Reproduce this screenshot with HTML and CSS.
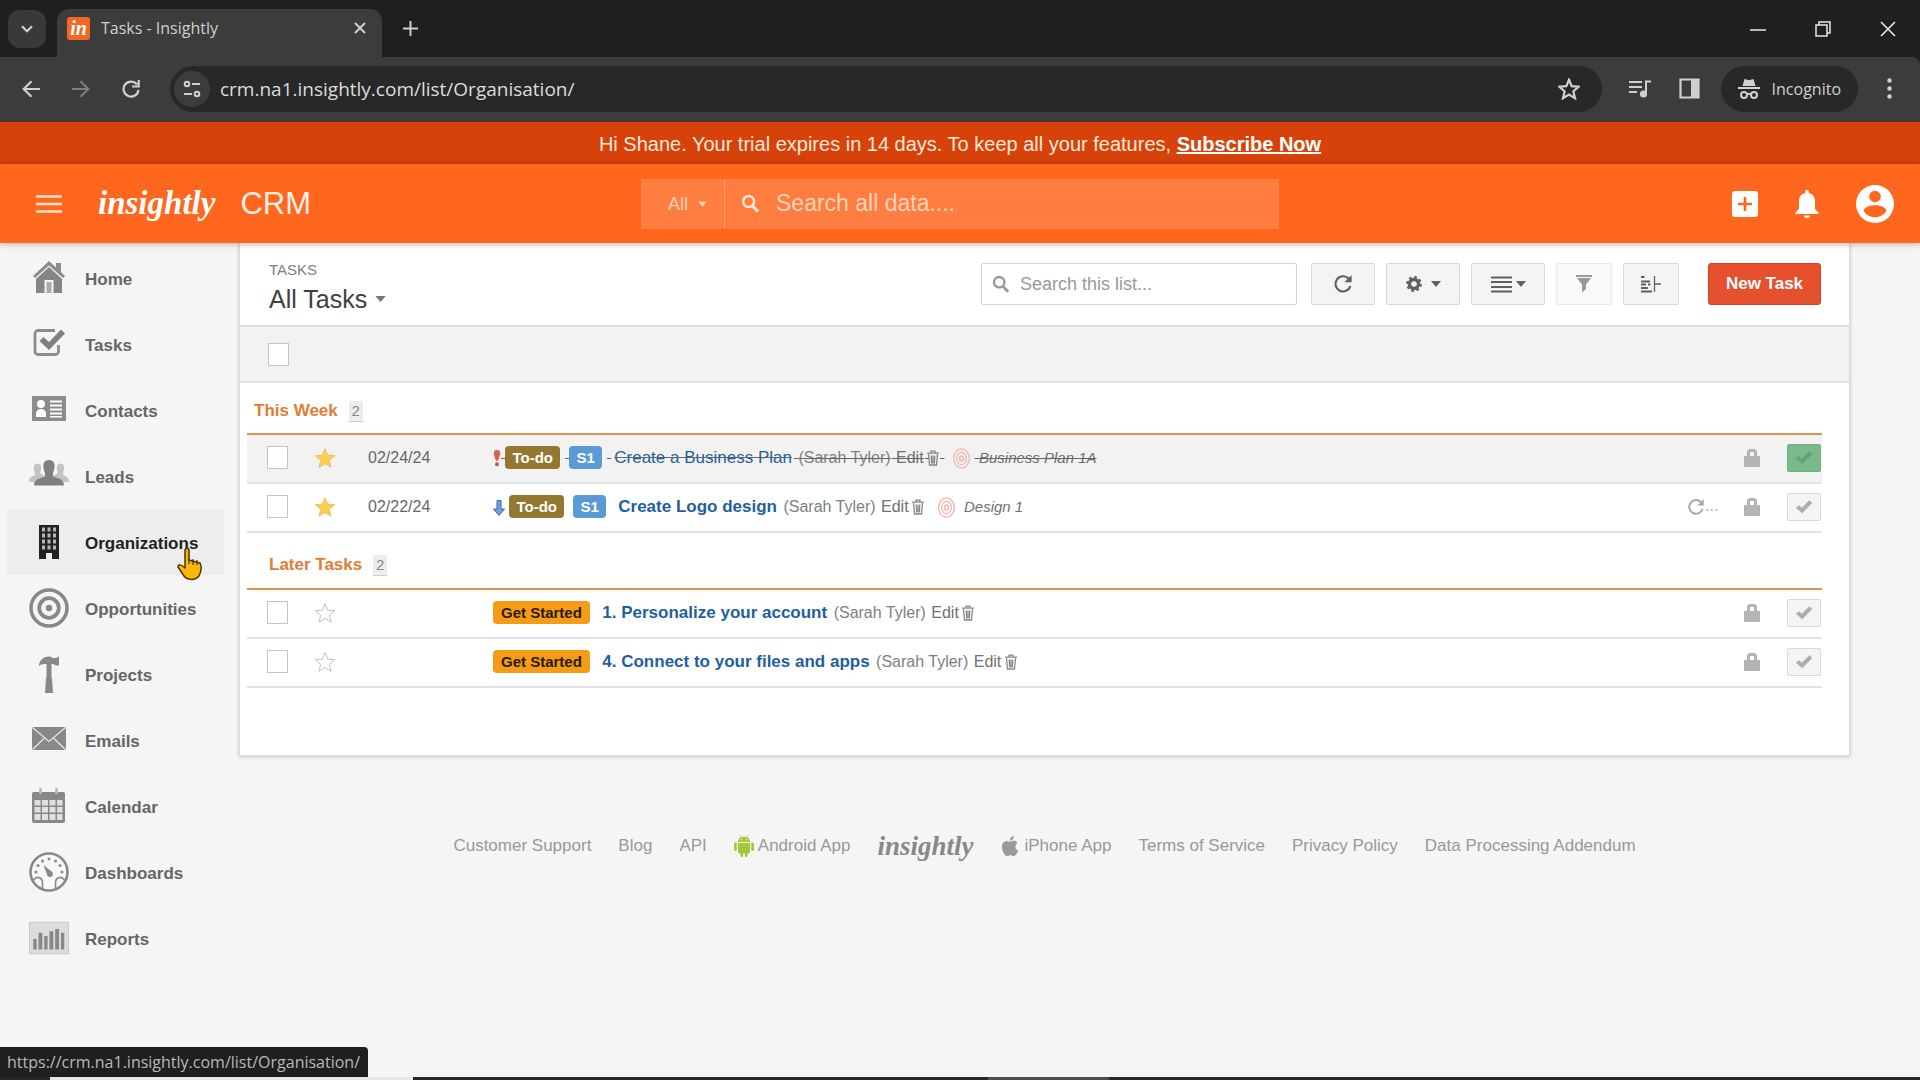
FILE: index.html
```html
<!DOCTYPE html>
<html lang="en">
<head>
    <meta charset="UTF-8">
    <meta name="viewport" content="width=device-width, initial-scale=1.0">
    <title>Tasks - Insightly</title>
    <link rel="stylesheet" href="styles.css">
</head>
<body>
    <!-- Shared icons -->
    <svg class="icon-defs" aria-hidden="true">
        <symbol id="i-caret" viewBox="0 0 12 7"><path fill="currentColor" d="M0 0h12L6 7z"/></symbol>
        <symbol id="i-search" viewBox="0 0 20 20"><circle cx="8" cy="8" r="5.8" fill="none" stroke="currentColor" stroke-width="2.6"/><path d="M12 12.5l6 6" stroke="currentColor" stroke-width="3.2"/></symbol>
        <symbol id="i-reload" viewBox="0 0 20 20"><path fill="none" stroke="currentColor" stroke-width="2.2" d="M15.6 4.6A7.6 7.6 0 1 0 17.4 12"/><path fill="currentColor" d="M18.6 1v7.2h-7.2z"/></symbol>
        <symbol id="i-star" viewBox="0 0 24 24"><path d="M12 1.8l2.9 7.1 7.7.6-5.9 5 1.9 7.6L12 18l-6.6 4.1 1.9-7.6-5.9-5 7.700-.6z"/></symbol>
        <symbol id="i-trash" viewBox="0 0 14 16"><path fill="none" stroke="currentColor" stroke-width="1.3" d="M1 3.2h12M5 3V1.2h4V3M2.5 4l1 11h7l1-11M5.3 5.5l.3 8M7 5.5v8M8.7 5.5l-.3 8"/></symbol>
        <symbol id="i-target" viewBox="0 0 20 24"><g fill="none" stroke="currentColor"><ellipse cx="10" cy="12" rx="9" ry="11" stroke-width="1.6"/><ellipse cx="10" cy="12" rx="5.6" ry="7" stroke-width="1.6"/><ellipse cx="10" cy="12" rx="2.2" ry="2.8" stroke-width="1.8"/></g></symbol>
        <symbol id="i-lock" viewBox="0 0 16 18"><path fill="currentColor" fill-rule="evenodd" d="M0 7h3V2l2-2h6l2 2v5h3v11H0zM6 7h4V3H6z"/></symbol>
        <symbol id="i-check" viewBox="0 0 20 16"><path fill="currentColor" d="M1 9.5l3.5-3 3 3L16 1l3.2 3L8 15.5z"/></symbol>
    </svg>

    <!-- Browser window -->
    <div class="browser">
        <div class="tab-strip">
            <button class="tab-search" aria-label="Search tabs">
                <svg width="12" height="8" viewBox="0 0 12 8"><path fill="none" stroke="currentColor" stroke-width="2.2" d="M1 1.2l5 5 5-5"/></svg>
            </button>
            <div class="tab">
                <span class="favicon">in</span>
                <span class="tab-title">Tasks - Insightly</span>
                <button class="tab-close" aria-label="Close tab">
                    <svg width="12" height="12" viewBox="0 0 12 12"><path stroke="currentColor" stroke-width="2" d="M1 1l10 10M11 1L1 11"/></svg>
                </button>
            </div>
            <button class="tab-new" aria-label="New tab">
                <svg width="15" height="15" viewBox="0 0 15 15"><path stroke="currentColor" stroke-width="2" d="M7.5 0v15M0 7.5h15"/></svg>
            </button>
            <div class="window-buttons">
                <button aria-label="Minimize"><svg width="16" height="16" viewBox="0 0 16 16"><path stroke="currentColor" stroke-width="1.5" d="M0 9h16"/></svg></button>
                <button aria-label="Restore"><svg width="16" height="16" viewBox="0 0 16 16"><path fill="none" stroke="currentColor" stroke-width="1.5" d="M1 4h11v11H1zM4 4V1h11v11h-3"/></svg></button>
                <button aria-label="Close"><svg width="16" height="16" viewBox="0 0 16 16"><path stroke="currentColor" stroke-width="1.6" d="M1 1l14 14M15 1L1 15"/></svg></button>
            </div>
        </div>
        <div class="address-row">
            <button class="nav-button" aria-label="Back"><svg width="18" height="18" viewBox="0 0 18 18"><path fill="none" stroke="currentColor" stroke-width="2.2" d="M18 9H2M9.5 1.2L1.7 9l7.8 7.8"/></svg></button>
            <button class="nav-button disabled" aria-label="Forward"><svg width="18" height="18" viewBox="0 0 18 18"><path fill="none" stroke="currentColor" stroke-width="2.2" d="M0 9h16M8.5 1.2L16.3 9l-7.8 7.8"/></svg></button>
            <button class="nav-button" aria-label="Reload"><svg width="18" height="18" viewBox="0 0 18 18"><path fill="none" stroke="currentColor" stroke-width="2.2" d="M15 4.5A7.5 7.5 0 1 0 16.5 10M16.7 0v6.5H10"/></svg></button>
            <div class="address-bar">
                <button class="site-info" aria-label="Site information">
                    <svg width="18" height="18" viewBox="0 0 18 18"><g fill="none" stroke="currentColor" stroke-width="2"><circle cx="4" cy="4" r="2.3"/><circle cx="14" cy="14" r="2.3"/><path d="M9 4h8M1 14h8"/></g></svg>
                </button>
                <input type="text" class="url" aria-label="Address" value="crm.na1.insightly.com/list/Organisation/">
                <button class="bookmark" aria-label="Bookmark">
                    <svg width="22" height="22" fill="none" stroke="currentColor" stroke-width="2.4"><use href="#i-star"/></svg>
                </button>
            </div>
            <button class="nav-button" aria-label="Media"><svg width="22" height="18" viewBox="0 0 22 18"><path fill="none" stroke="currentColor" stroke-width="2" d="M0 2h13M0 7h13M0 12h8M17 14V1.5h5"/><circle cx="14.5" cy="14" r="3.6" fill="currentColor"/></svg></button>
            <button class="nav-button" aria-label="Side panel"><svg width="21" height="21" viewBox="0 0 21 21"><path fill="none" stroke="currentColor" stroke-width="2.2" d="M1.5 1.5h18v18h-18z"/><path fill="currentColor" d="M12 1h8v19h-8z"/></svg></button>
            <button class="incognito">
                <svg width="22" height="20" viewBox="0 0 22 20"><path fill="currentColor" d="M6.5 0L11 1.2 15.5 0l2 7H4.500zM0 8h22v2H0z"/><path fill="none" stroke="currentColor" stroke-width="2" d="M9 15.5q2-1.500 4 0"/><circle cx="6" cy="16" r="3" fill="none" stroke="currentColor" stroke-width="2"/><circle cx="16" cy="16" r="3" fill="none" stroke="currentColor" stroke-width="2"/></svg>
                Incognito
            </button>
            <button class="menu-dots" aria-label="Menu"><svg width="5" height="21" viewBox="0 0 5 21" fill="currentColor"><circle cx="2.5" cy="2.5" r="2.2"/><circle cx="2.5" cy="10.5" r="2.2"/><circle cx="2.5" cy="18.5" r="2.2"/></svg></button>
        </div>
    </div>

    <!-- Trial banner -->
    <div class="banner">Hi Shane. Your trial expires in 14 days. To keep all your features, <a href="#">Subscribe Now</a></div>

    <!-- App header -->
    <header class="app-header">
        <div class="brand">
            <button class="hamburger" aria-label="Menu"><svg width="26" height="18" viewBox="0 0 26 18"><path stroke="currentColor" stroke-width="2.4" d="M0 1.5h26M0 9h26M0 16.5h26"/></svg></button>
            <a href="#" class="logo">insightly</a>
            <span class="product">CRM</span>
        </div>
        <div class="global-search">
            <label class="scope">
                <select aria-label="Search in"><option>All</option></select>
                <svg width="9" height="6"><use href="#i-caret"/></svg>
            </label>
            <svg class="search-icon" width="19" height="19"><use href="#i-search"/></svg>
            <input type="text" placeholder="Search all data...." aria-label="Search all data">
        </div>
        <div class="header-actions">
            <button aria-label="Add"><svg width="26" height="26" viewBox="0 0 26 26"><rect width="26" height="26" rx="3" fill="currentColor"/><path stroke="#ff661e" stroke-width="2.6" d="M13 6v14M6 13h14"/></svg></button>
            <button aria-label="Notifications"><svg width="24" height="28" viewBox="0 0 24 28"><path fill="currentColor" d="M10.3 1.5a1.7 1.7 0 0 1 3.4 0V3c4 .8 6.3 4 6.300 8v8l3.500 3.500V24H.5v-1.500L4 19v-8c0-4 2.300-7.200 6.300-8zM9 25.500h6a3 2.500 0 0 1-6 0z"/></svg></button>
            <button aria-label="Account"><svg width="38" height="38" viewBox="0 0 38 38"><circle cx="19" cy="19" r="19" fill="currentColor"/><circle cx="19" cy="11.5" r="5.8" fill="#ff661e"/><path fill="#ff661e" d="M7.5 25.500c2.500-7 20.500-7 23 0-4.500 9-18.500 9-23 0z"/></svg></button>
        </div>
    </header>

    <div class="layout">
        <!-- Sidebar -->
        <nav class="sidebar">
            <a href="#"><svg width="40" height="40" viewBox="0 0 40 40"><path fill="#8c8c8c" d="M20 3L4 18l2 2L20 7.5 34 20l2-2-4-4V5h-5v4.500z"/><path fill="#858585" d="M20 9L7 21v14h8.500V22h9v13H33V21z"/><path fill="#aaa" d="M17.500 24h5v11h-5z"/></svg>Home</a>
            <a href="#"><svg width="40" height="40" viewBox="0 0 40 40"><path fill="none" stroke="#8c8c8c" stroke-width="2.8" d="M26 6.500H9a3 3 0 0 0-3 3v18a3 3 0 0 0 3 3h17.500a3 3 0 0 0 3-3V21"/><path fill="#7f7f7f" d="M10.500 17l4-4 5.500 5L32 5.500l4 4L20 26z"/></svg>Tasks</a>
            <a href="#"><svg width="40" height="40" viewBox="0 0 40 40"><path fill="#8c8c8c" d="M3 6h34v25H3z"/><g fill="#fff"><circle cx="12" cy="14" r="4"/><path d="M7 27v-4q1-4 5-4t5 4v4z"/><path d="M21 10.500h12v2H21zm0 4h12v2H21zm0 4h12v2H21zm0 4h12v2H21zm0 3.500h12v1.500H21z"/></g></svg>Contacts</a>
            <a href="#"><svg width="40" height="40" viewBox="0 0 40 40"><path fill="#c4c4c4" d="M8.500 7.500c4 0 4.500 4 2.500 9.500l5 3v6H0c0-5 2-5 5.500-6.500l.5-2c-2-5.500-1.500-10 2.500-10zM31.500 7.500c-4 0-4.500 4-2.500 9.500l-5 3v6h16c0-5-2-5-5.500-6.500l-.5-2c2-5.500 1.500-10-2.500-10z"/><path fill="#808080" d="M20 4c6 0 7 6 4 13v3.500c5 2 11 2.500 11 9H5c0-6.500 6-7 11-9V17C13 10 14 4 20 4z"/></svg>Leads</a>
            <a href="#" class="active"><svg width="40" height="40" viewBox="0 0 40 40"><path fill="#222" d="M10 3h20v34h-7v-6h-6v6h-7z"/><path stroke="#b5b5b5" stroke-width="3" stroke-dasharray="4 2" d="M14.500 5.500v22M20 5.500v22M25.500 5.500v22"/></svg>Organizations
                <svg class="pointer" width="25" height="34" viewBox="0 0 25 34"><path fill="#fbb70c" stroke="#4a3510" stroke-width="1.5" stroke-linejoin="round" d="M8 3.500C8 .5 12 .5 12 3.500V13l11 3c2 4 1 9-1 13-4 5-12 4-15 0l-6-9c0-3 3-3 7 1z"/><path fill="none" stroke="#4a3510" stroke-width="1.2" d="M12 12v5m4-5v6m4-5v5"/></svg>
            </a>
            <a href="#"><svg width="40" height="40" viewBox="0 0 40 40"><g fill="none" stroke="#888"><circle cx="20" cy="20" r="18" stroke-width="3.5"/><circle cx="20" cy="20" r="9.8" stroke-width="3.8"/></g><circle cx="20" cy="20" r="3.2" fill="#888"/></svg>Opportunities</a>
            <a href="#"><svg width="40" height="40" viewBox="0 0 40 40"><path fill="#888" d="M10 12c0-6 5-10 11-9.500l3 1.500h3l3-1.500v9h-3l-3-1.500h-1.500v14h.5l1 15h-8l1-15h.5V10c-3 0-5 0-7.500 2z"/></svg>Projects</a>
            <a href="#"><svg width="40" height="40" viewBox="0 0 40 40"><rect x="3" y="7" width="34" height="23" rx="1.5" fill="#888"/><path fill="none" stroke="#e4e4e4" stroke-width="1.3" d="M3.500 7.500L20 21.500 36.500 7.500M3.500 29.500l12-11.500M36.500 29.500l-12-11.500"/></svg>Emails</a>
            <a href="#"><svg width="40" height="40" viewBox="0 0 40 40"><rect x="3" y="6" width="33" height="31" rx="2" fill="#888"/><path fill="#e0e0e0" d="M5.500 14h6v5.500h-6zm7.500 0h6v5.500h-6zm7.500 0h6v5.500h-6zm7.500 0h5.500v5.500H28zM5.500 21h6v5.500h-6zm7.500 0h6v5.500h-6zm7.500 0h6v5.500h-6zm7.500 0h5.500v5.500H28zM5.500 28h6v6h-6zm7.500 0h6v6h-6zm7.500 0h6v6h-6zm7.500 0h5.500v6H28z"/><path stroke="#bbb" stroke-width="2.6" d="M11.500 2v6M27.500 2v6"/></svg>Calendar</a>
            <a href="#"><svg width="40" height="40" viewBox="0 0 40 40"><circle cx="20" cy="20" r="18.5" fill="#f8f8f8" stroke="#888" stroke-width="2.6"/><g fill="#888"><circle cx="7" cy="20" r="1.5"/><circle cx="9" cy="13.5" r="1.5"/><circle cx="13.5" cy="9" r="1.5"/><circle cx="20" cy="7" r="1.5"/><circle cx="26.5" cy="9" r="1.5"/><circle cx="31" cy="13.5" r="1.5"/><circle cx="33" cy="20" r="1.5"/><path d="M14.500 13l8 6.500a3 3 0 1 1-4.500 3z"/></g><path fill="none" stroke="#888" stroke-width="1.6" d="M4.500 28c4-5 9-2 9 2.500V37M35.500 28c-4-5-9-2-9 2.500V37"/></svg>Dashboards</a>
            <a href="#"><svg width="42" height="40" viewBox="0 0 42 40"><path fill="#dcdcdc" stroke="#c6c6c6" d="M.5 3.500h41v33H.5z"/><path fill="#888" d="M4.500 21H8v11H4.500zM10 14.500h4V32h-4zM16 18h3.500v14H16zM21.500 13h4v19h-4zM27.500 10.500h4V32h-4zM33.500 14.500h3.500V32h-3.500z"/></svg>Reports</a>
        </nav>

        <main class="main">
            <section class="panel">
                <div class="panel-header">
                    <div class="list-title">
                        <div class="list-kind">TASKS</div>
                        <button class="list-name">All Tasks <svg width="11" height="6"><use href="#i-caret"/></svg></button>
                    </div>
                    <div class="list-tools">
                        <div class="list-search">
                            <svg width="18" height="18"><use href="#i-search"/></svg>
                            <input type="text" placeholder="Search this list..." aria-label="Search this list">
                        </div>
                        <button class="tool tool-refresh" aria-label="Refresh"><svg width="20" height="20"><use href="#i-reload"/></svg></button>
                        <button class="tool tool-wide" aria-label="Actions">
                            <svg width="16" height="16" viewBox="0 0 16 16"><circle cx="8" cy="8" r="4.5" fill="none" stroke="currentColor" stroke-width="3.4"/><circle cx="8" cy="8" r="6.8" fill="none" stroke="currentColor" stroke-width="2.2" stroke-dasharray="2.7 2.64"/></svg>
                            <svg width="10" height="6"><use href="#i-caret"/></svg>
                        </button>
                        <button class="tool tool-wide tool-view" aria-label="View">
                            <svg width="21" height="17" viewBox="0 0 21 17"><path stroke="currentColor" stroke-width="2" d="M0 1.500h21M0 6h21M0 11h21M0 15.500h21"/></svg>
                            <svg width="10" height="6"><use href="#i-caret"/></svg>
                        </button>
                        <button class="tool tool-filter" aria-label="Filter"><svg width="16" height="18" viewBox="0 0 16 18"><path fill="currentColor" d="M0 0h16v2H0zM1 3h14L10 9.500V14l-4 3.500v-8z"/></svg></button>
                        <button class="tool" aria-label="Collapse"><svg width="20" height="18" viewBox="0 0 20 18"><path fill="none" stroke="currentColor" stroke-width="2.2" d="M0 2h3.500M0 6.500h9M0 9.500h5M7 9.500h2.500M0 13h7M0 16.500h11"/><path stroke="currentColor" stroke-width="1.3" d="M13.500 1v16M13.500 9H20"/></svg></button>
                        <button class="new-task">New Task</button>
                    </div>
                </div>
                <div class="select-bar"><input type="checkbox" aria-label="Select all tasks"></div>

                <div class="table-wrap">
                    <table class="tasks">
                        <tbody>
                            <tr class="group group-first"><th colspan="7">This Week <span class="count">2</span></th></tr>
                            <tr class="task done">
                                <td class="col-check"><input type="checkbox" aria-label="Select Create a Business Plan"></td>
                                <td class="col-star"><button class="star on" aria-label="Starred"><svg width="22" height="22"><use href="#i-star"/></svg></button></td>
                                <td class="col-date">02/24/24</td>
                                <td class="col-task"><svg width="8" height="17" viewBox="0 0 8 19"><path fill="#d9614c" d="M4 0c3 0 4 2 3.500 5L5.200 12H2.800L.5 5C0 2 1 0 4 0z"/><circle cx="4" cy="16" r="2.2" fill="#c4523d"/></svg>
                                    <span class="tag tag-todo">To-do</span> <span class="tag tag-s1">S1</span> <a href="#" class="task-name">Create a Business Plan</a> <span class="owner">(Sarah Tyler)</span> <a href="#" class="edit">Edit</a> <button class="trash" aria-label="Delete"><svg width="14" height="16"><use href="#i-trash"/></svg></button> <svg class="target" width="19" height="21"><use href="#i-target"/></svg> <a href="#" class="linked">Business Plan 1A</a></td>
                                <td class="col-repeat"></td>
                                <td class="col-lock"><svg width="16" height="18"><use href="#i-lock"/></svg></td>
                                <td class="col-done"><button class="complete" aria-label="Completed"><svg width="18" height="15"><use href="#i-check"/></svg></button></td>
                            </tr>
                            <tr class="task">
                                <td class="col-check"><input type="checkbox" aria-label="Select Create Logo design"></td>
                                <td class="col-star"><button class="star on" aria-label="Starred"><svg width="22" height="22"><use href="#i-star"/></svg></button></td>
                                <td class="col-date">02/22/24</td>
                                <td class="col-task"><svg width="12" height="16" viewBox="0 0 12 16"><path fill="#6f9fe6" stroke="#3c66b0" d="M4 .5h4V9h3.500L6 15.500.5 9H4z"/></svg>
                                    <span class="tag tag-todo">To-do</span> <span class="tag tag-s1">S1</span> <a href="#" class="task-name">Create Logo design</a> <span class="owner">(Sarah Tyler)</span> <a href="#" class="edit">Edit</a> <button class="trash" aria-label="Delete"><svg width="14" height="16"><use href="#i-trash"/></svg></button> <svg class="target" width="19" height="21"><use href="#i-target"/></svg> <a href="#" class="linked">Design 1</a></td>
                                <td class="col-repeat"><svg width="18" height="18"><use href="#i-reload"/></svg>...</td>
                                <td class="col-lock"><svg width="16" height="18"><use href="#i-lock"/></svg></td>
                                <td class="col-done"><button class="complete" aria-label="Complete"><svg width="18" height="15"><use href="#i-check"/></svg></button></td>
                            </tr>
                        </tbody>
                        <tbody>
                            <tr class="group"><th colspan="7">Later Tasks <span class="count">2</span></th></tr>
                            <tr class="task">
                                <td class="col-check"><input type="checkbox" aria-label="Select Personalize your account"></td>
                                <td class="col-star"><button class="star" aria-label="Star"><svg width="22" height="22"><use href="#i-star"/></svg></button></td>
                                <td class="col-date"></td>
                                <td class="col-task"><span class="tag tag-start">Get Started</span> <a href="#" class="task-name">1. Personalize your account</a> <span class="owner">(Sarah Tyler)</span> <a href="#" class="edit">Edit</a> <button class="trash" aria-label="Delete"><svg width="14" height="16"><use href="#i-trash"/></svg></button></td>
                                <td class="col-repeat"></td>
                                <td class="col-lock"><svg width="16" height="18"><use href="#i-lock"/></svg></td>
                                <td class="col-done"><button class="complete" aria-label="Complete"><svg width="18" height="15"><use href="#i-check"/></svg></button></td>
                            </tr>
                            <tr class="task">
                                <td class="col-check"><input type="checkbox" aria-label="Select Connect to your files and apps"></td>
                                <td class="col-star"><button class="star" aria-label="Star"><svg width="22" height="22"><use href="#i-star"/></svg></button></td>
                                <td class="col-date"></td>
                                <td class="col-task"><span class="tag tag-start">Get Started</span> <a href="#" class="task-name">4. Connect to your files and apps</a> <span class="owner">(Sarah Tyler)</span> <a href="#" class="edit">Edit</a> <button class="trash" aria-label="Delete"><svg width="14" height="16"><use href="#i-trash"/></svg></button></td>
                                <td class="col-repeat"></td>
                                <td class="col-lock"><svg width="16" height="18"><use href="#i-lock"/></svg></td>
                                <td class="col-done"><button class="complete" aria-label="Complete"><svg width="18" height="15"><use href="#i-check"/></svg></button></td>
                            </tr>
                        </tbody>
                    </table>
                </div>
            </section>

            <footer class="footer">
                <a href="#">Customer Support</a>
                <a href="#">Blog</a>
                <a href="#">API</a>
                <a href="#"><svg width="20" height="22" viewBox="0 0 20 22"><path fill="#a4c639" d="M4 8h12v9a1.500 1.500 0 0 1-1.500 1.500H13.500v2.200a1.300 1.300 0 0 1-2.600 0v-2.200H9.100v2.200a1.300 1.300 0 0 1-2.600 0v-2.200H5.500A1.500 1.500 0 0 1 4 17zM0 9a1.400 1.400 0 0 1 2.800 0v5.500a1.400 1.400 0 0 1-2.800 0zM17.200 9A1.400 1.400 0 0 1 20 9v5.500a1.400 1.400 0 0 1-2.800 0zM4 7c.1-2 1.200-3.500 2.800-4.400L5.500.5l.6-.4 1.400 2.200a7 7 0 0 1 5 0L13.900.1l.6.4-1.300 2.100C14.800 3.500 15.900 5 16 7z"/><g fill="#fff"><circle cx="7.3" cy="4.8" r=".7"/><circle cx="12.700" cy="4.8" r=".7"/></g></svg>Android App</a>
                <a href="#" class="footer-logo">insightly</a>
                <a href="#"><svg width="20" height="22" viewBox="2 1 20 22"><path fill="#999" d="M18.710 19.500c-.83 1.240-1.710 2.450-3.050 2.470-1.340.03-1.770-.79-3.290-.79-1.530 0-2 .77-3.270.82-1.310.05-2.300-1.320-3.140-2.530C4.250 17 2.940 12.450 4.700 9.390c.87-1.520 2.430-2.480 4.120-2.510 1.280-.02 2.500.87 3.290.87.78 0 2.260-1.070 3.810-.91.65.03 2.470.26 3.640 1.980-.09.06-2.170 1.280-2.150 3.810.03 3.020 2.650 4.030 2.680 4.040-.03.07-.42 1.440-1.380 2.830M13 3.500c.73-.83 1.940-1.460 2.940-1.500.13 1.170-.34 2.350-1.040 3.190-.69.85-1.830 1.510-2.950 1.420-.15-1.150.41-2.350 1.050-3.110z"/></svg>iPhone App</a>
                <a href="#">Terms of Service</a>
                <a href="#">Privacy Policy</a>
                <a href="#">Data Processing Addendum</a>
            </footer>
        </main>
    </div>

    <div class="status-bubble">https://crm.na1.insightly.com/list/Organisation/</div>
    <div class="taskbar"><span class="taskbar-start"></span><span class="taskbar-search"></span><span class="taskbar-app"></span></div>
</body>
</html>
```

FILE: styles.css
```css
* {
    margin: 0;
    padding: 0;
    box-sizing: border-box;
}

body {
    display: flex;
    flex-direction: column;
    min-height: 100vh;
    background: #f5f5f5;
    color: #666;
    font-family: "Liberation Sans", Arial, sans-serif;
    font-size: 16px;
}

button,
input,
select {
    font: inherit;
    color: inherit;
    background: none;
    border: none;
    outline: none;
}

button {
    display: flex;
    align-items: center;
    justify-content: center;
    cursor: pointer;
}

a {
    color: inherit;
    text-decoration: none;
}

svg {
    flex-shrink: 0;
}

.icon-defs {
    position: absolute;
    width: 0;
    height: 0;
}

/* Browser window */
.browser {
    background: #1f1f1f;
    color: #d0d0d0;
    font-family: "Open Sans", "Noto Sans", sans-serif;
}

.tab-strip {
    display: flex;
    align-items: center;
    height: 57px;
    padding-left: 8px;
}

.tab-search {
    width: 38px;
    height: 38px;
    margin-right: 11px;
    border-radius: 12px;
    background: #393939;
}

.tab {
    display: flex;
    align-items: center;
    align-self: flex-end;
    width: 325px;
    height: 48px;
    padding: 0 14px 10px 10px;
    border-radius: 12px 12px 0 0;
    background: #3c3c3c;
}

.favicon {
    width: 23px;
    height: 23px;
    margin-right: 11px;
    border-radius: 3px;
    background: #f26722;
    color: #fff;
    font-family: "Liberation Serif", serif;
    font-size: 20px;
    font-style: italic;
    font-weight: bold;
    line-height: 22px;
    text-align: center;
}

.tab-title {
    flex: 1;
    font-size: 16px;
}

.tab-close {
    width: 16px;
    height: 20px;
}

.tab-new {
    width: 40px;
    height: 40px;
    margin-left: 8px;
}

.window-buttons {
    display: flex;
    margin-left: auto;
}

.window-buttons button {
    width: 65px;
    height: 57px;
    color: #e8e8e8;
}

.address-row {
    display: flex;
    align-items: center;
    height: 65px;
    padding: 0 12px 2px 6px;
    background: #3c3c3c;
    border-radius: 0 8px 0 0;
}

.nav-button {
    width: 50px;
    height: 46px;
}

.nav-button.disabled {
    color: #7c7c7c;
}

.address-bar {
    display: flex;
    align-items: center;
    flex: 1;
    height: 46px;
    margin: 0 13px 0 14px;
    padding: 0 17px 0 4px;
    border-radius: 23px;
    background: #282828;
}

.site-info {
    width: 36px;
    height: 36px;
    margin-right: 10px;
    border-radius: 50%;
    background: #3c3c3c;
}

.url {
    flex: 1;
    color: #dcdcdc;
    font-size: 19px;
}

.bookmark {
    width: 32px;
    height: 32px;
}

.incognito {
    gap: 12px;
    height: 46px;
    margin-left: 6px;
    padding: 0 17px;
    border-radius: 23px;
    background: #282828;
    font-size: 16px;
}

.menu-dots {
    width: 38px;
    height: 46px;
    margin-left: 12px;
}

/* Trial banner */
.banner {
    height: 42px;
    background: #d7420a;
    color: #ffeada;
    font-size: 20px;
    line-height: 44px;
    text-align: center;
}

.banner a {
    color: #fff;
    font-weight: bold;
    text-decoration: underline;
}

/* App header */
.app-header {
    display: grid;
    grid-template-columns: 1fr minmax(0, 638px) 1fr;
    align-items: center;
    height: 79px;
    padding: 0 26px;
    background: #ff661e;
    color: #fff;
    box-shadow: 0 1px 6px rgba(0, 0, 0, 0.3);
    position: relative;
    z-index: 1;
}

.brand {
    display: flex;
    align-items: center;
    padding-left: 10px;
}

.hamburger {
    margin-right: 36px;
    color: #ffe0cc;
}

.logo,
.footer-logo {
    font-family: "Liberation Serif", serif;
    font-size: 33px;
    font-style: italic;
    font-weight: bold;
}

.product {
    margin-left: 25px;
    color: #ffeee2;
    font-size: 31px;
}

.global-search {
    display: flex;
    align-items: center;
    height: 50px;
    background: #ff7d40;
    color: #ffd3ba;
}

.scope {
    display: flex;
    align-items: center;
    gap: 6px;
    align-self: stretch;
    width: 84px;
    padding-left: 27px;
    border-right: 1px solid #ff9f70;
}

.scope select {
    appearance: none;
    width: 24px;
    font-size: 18px;
}

.search-icon {
    margin: 0 16px;
    color: #ffe6d8;
}

.global-search input {
    flex: 1;
    font-size: 23px;
}

.global-search input::placeholder {
    color: #ffd3ba;
}

.header-actions {
    display: flex;
    align-items: center;
    justify-content: flex-end;
    gap: 37px;
}

/* Sidebar */
.layout {
    display: flex;
    flex: 1;
}

.sidebar {
    width: 239px;
    padding: 2px 15px 0 7px;
}

.sidebar a {
    display: flex;
    align-items: center;
    gap: 16px;
    height: 66px;
    padding: 4px 0 0 22px;
    font-size: 17px;
    font-weight: bold;
    position: relative;
}

.sidebar a > svg:first-child {
    width: 40px;
    margin-bottom: 4px;
}

.sidebar a.active {
    background: #ededed;
    color: #222;
}

.sidebar .pointer {
    position: absolute;
    left: 170px;
    top: 38px;
}

/* Task list */
.main {
    flex: 1;
    padding-right: 70px;
}

.panel {
    min-height: 513px;
    background: #fff;
    border: 1px solid #dcdcdc;
    border-top: none;
    box-shadow: 0 1px 4px rgba(0, 0, 0, 0.2);
}

.panel-header {
    display: flex;
    justify-content: space-between;
    height: 84px;
    padding: 17px 28px 0 29px;
    border-bottom: 2px solid #dedede;
}

.list-kind {
    color: #808080;
    font-size: 15px;
    line-height: 20px;
}

.list-name {
    gap: 8px;
    color: #404040;
    font-size: 25px;
    line-height: 38px;
}

.list-name svg {
    color: #777;
}

.list-tools {
    display: flex;
    gap: 11px;
    padding-top: 3px;
}

.list-search {
    display: flex;
    align-items: center;
    gap: 10px;
    width: 316px;
    height: 42px;
    margin-right: 3px;
    padding: 0 10px;
    border: 1px solid #d4d4d4;
    border-radius: 2px;
    color: #999;
}

.list-search input {
    flex: 1;
    min-width: 0;
    font-size: 18px;
}

.list-search input::placeholder {
    color: #999;
}

.tool {
    width: 56px;
    height: 42px;
    border: 1px solid #d9d9d9;
    border-radius: 2px;
    background: #f4f4f4;
    color: #606060;
}

.tool-refresh {
    width: 64px;
}

.tool-wide {
    gap: 9px;
    width: 74px;
}

.tool-view {
    gap: 4px;
}

.tool-filter {
    border-color: #ebebeb;
    background: #f9f9f9;
    color: #999;
}

.new-task {
    width: 113px;
    height: 42px;
    margin-left: 18px;
    border: 1px solid #cf4527;
    border-radius: 3px;
    background: #e5502f;
    color: #fff;
    font-size: 17px;
    font-weight: bold;
}

.select-bar {
    display: flex;
    align-items: center;
    height: 56px;
    padding-left: 28px;
    border-bottom: 2px solid #e2e2e2;
    background: #f2f2f2;
}

input[type="checkbox"] {
    appearance: none;
    display: block;
    width: 21px;
    height: 23px;
    border: 1px solid #c4c4c4;
    background: #fff;
}

.table-wrap {
    padding: 0 27px 0 7px;
}

.tasks {
    width: 100%;
    border-collapse: collapse;
}

.group th {
    height: 57px;
    padding: 10px 0 0 22px;
    border-bottom: 2px solid #dc9550;
    color: #e27d33;
    font-size: 17px;
    text-align: left;
}

.group-first th {
    height: 51px;
    padding: 6px 0 0 7px;
}

.count {
    display: inline-block;
    margin-left: 6px;
    padding: 0 3px;
    border-bottom: 1px solid #ccc;
    background: #ededed;
    color: #888;
    font-size: 15px;
    font-weight: normal;
    line-height: 20px;
}

.task td {
    height: 49px;
    padding-bottom: 2px;
    border-bottom: 2px solid #e2e2e2;
    white-space: nowrap;
}

.task.done {
    background: #f2f2f2;
}

.task .col-check {
    width: 60px;
    padding-left: 20px;
}

.task .col-star {
    width: 61px;
    padding-left: 7px;
}

.star {
    fill: #fff;
    stroke: #bbb;
}

.star.on {
    fill: #fccf52;
    stroke: #e8bd55;
}

.col-date {
    width: 125px;
}

.task svg {
    display: block;
}

.task .col-task > svg,
.task .col-repeat > svg {
    display: inline-block;
    vertical-align: middle;
}

.done .col-task {
    text-decoration: line-through;
}

.tag {
    display: inline-block;
    margin-right: 5px;
    padding: 0 7px;
    border-radius: 4px;
    color: #fff;
    font-size: 15px;
    font-weight: bold;
    line-height: 23px;
}

.tag-todo {
    background: #957830;
}

.tag-s1 {
    background: #5a9bd5;
}

.tag-start {
    padding: 0 8px;
    background: #f59c16;
    color: #2b1a00;
}

.task-name {
    margin: 0 2px 0 3px;
    color: #1f5f9f;
    font-size: 17px;
    font-weight: bold;
}

.done .task-name {
    font-weight: normal;
}

.owner,
.edit {
    margin-right: 1px;
    color: #808080;
}

.edit {
    color: #707070;
}

.trash {
    display: inline-block;
    margin-left: -3px;
    color: #888;
    vertical-align: text-bottom;
}

.target {
    margin: 0 4px 0 7px;
    color: #f4b8b8;
}

.linked {
    color: #707070;
    font-size: 15px;
    font-style: italic;
}

.col-repeat {
    width: 57px;
    color: #a8a8a8;
}

.col-lock {
    width: 43px;
    color: #b4b4b4;
}

.col-done {
    width: 35px;
}

.complete {
    width: 34px;
    height: 28px;
    border: 1px solid #d9d9d9;
    border-radius: 2px;
    background: #f4f4f4;
    color: #adadad;
}

.done .complete {
    border-color: #74b087;
    background: #79b98a;
    color: #62a475;
}

/* Footer */
.footer {
    display: flex;
    align-items: center;
    justify-content: center;
    gap: 27px;
    padding-top: 70px;
    color: #999;
    font-size: 17px;
}

.footer a {
    display: flex;
    align-items: center;
    gap: 4px;
}

.footer .footer-logo {
    color: #888;
    font-size: 27px;
    line-height: 40px;
}

/* Link preview and the edge of the taskbar */
.status-bubble {
    position: fixed;
    left: 0;
    bottom: 3px;
    padding: 0 8px 0 7px;
    border-radius: 0 4px 0 0;
    background: #1f1f1f;
    color: #b8b8b8;
    font-family: "Open Sans", "Noto Sans", sans-serif;
    font-size: 16px;
    line-height: 30px;
}

.taskbar {
    display: flex;
    position: fixed;
    left: 0;
    right: 0;
    bottom: 0;
    height: 3px;
    background: #262626;
}

.taskbar-start {
    width: 50px;
}

.taskbar-search {
    width: 363px;
    background: #e8e8e8;
}

.taskbar-app {
    width: 121px;
    margin-left: 575px;
    background: #4c4c4c;
}
```
